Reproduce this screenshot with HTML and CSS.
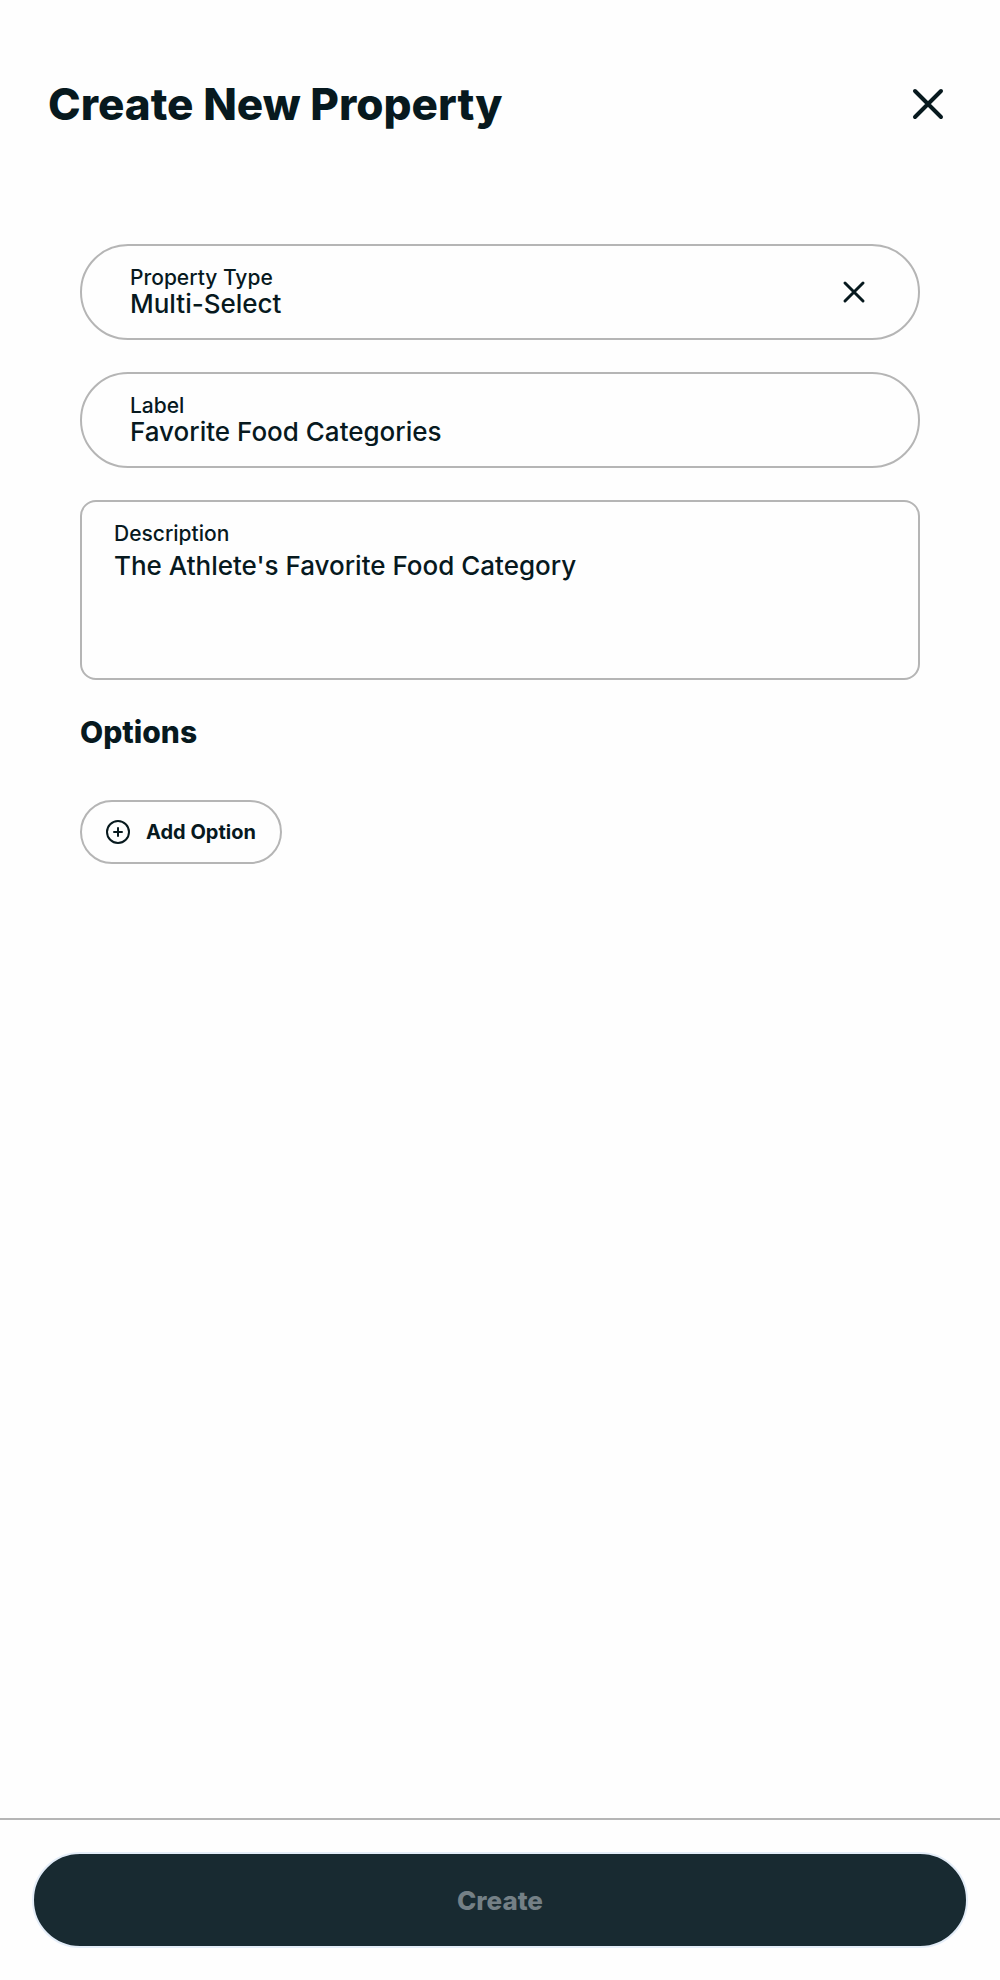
FILE: index.html
```html
<!DOCTYPE html>
<html lang="en">
<head>
  <meta charset="utf-8">
  <meta name="viewport" content="width=device-width, initial-scale=1">
  <title>Create New Property</title>
  <link rel="stylesheet" href="styles.css">
</head>
<body>
  <form class="panel">
    <header class="panel-header">
      <h1 class="panel-title">Create New Property</h1>
      <button class="icon-button close-button" type="button" aria-label="Close">
        <svg width="48" height="48" viewBox="0 0 48 48" aria-hidden="true"><path d="M11 11 37 37M37 11 11 37"/></svg>
      </button>
    </header>
    <main class="panel-body">
      <div class="field">
        <div class="field-text">
          <label class="field-label" for="type">Property Type</label>
          <select class="field-value" id="type">
            <option selected>Multi-Select</option>
          </select>
        </div>
        <button class="icon-button clear-button" type="button" aria-label="Clear property type">
          <svg width="32" height="32" viewBox="0 0 32 32" aria-hidden="true"><path d="M7 7 25 25M25 7 7 25"/></svg>
        </button>
      </div>
      <div class="field">
        <div class="field-text">
          <label class="field-label" for="label">Label</label>
          <input class="field-value" id="label" type="text" value="Favorite Food Categories">
        </div>
      </div>
      <div class="field field-area">
        <label class="field-label" for="description">Description</label>
        <textarea class="field-value" id="description">The Athlete's Favorite Food Category</textarea>
      </div>
      <section class="options">
        <h2 class="options-title">Options</h2>
        <button class="add-button" type="button">
          <svg width="24" height="24" viewBox="0 0 24 24" aria-hidden="true"><circle cx="12" cy="12" r="11"/><path d="M12 8v8M8 12h8"/></svg>
          Add Option
        </button>
      </section>
    </main>
    <footer class="panel-footer">
      <button class="create-button" type="submit" disabled>Create</button>
    </footer>
  </form>
</body>
</html>
```
FILE: styles.css
```css
:root {
  --ink: #07191e;
  --line: #b5b5b5;
}

* {
  box-sizing: border-box;
}

body {
  margin: 0;
  background: #fefefe;
  color: var(--ink);
  font-family: Inter, "Liberation Sans", sans-serif;
}

button,
input,
select,
textarea {
  font: inherit;
  color: inherit;
}

svg {
  display: block;
  flex: none;
  fill: none;
  stroke: currentColor;
  stroke-width: 2;
  stroke-linecap: round;
}

.panel {
  display: flex;
  flex-direction: column;
  min-height: 100vh;
}

.panel-header {
  display: flex;
  align-items: center;
  justify-content: space-between;
  padding: 80px 48px;
}

.panel-title {
  margin: 0;
  font-size: 44px;
  line-height: 48px;
  font-weight: 800;
}

.icon-button {
  flex: none;
  padding: 0;
  border: 0;
  background: none;
}

.close-button svg {
  stroke-width: 4;
}

.panel-body {
  display: flex;
  flex: 1;
  flex-direction: column;
  gap: 32px;
  padding: 36px 80px;
}

.field {
  display: flex;
  align-items: center;
  min-height: 96px;
  padding: 0 48px;
  border: 2px solid var(--line);
  border-radius: 48px;
}

.field-text {
  display: flex;
  flex: 1;
  flex-direction: column;
  min-width: 0;
}

.field-label {
  font-size: 21px;
  line-height: 24px;
  font-weight: 500;
}

.field-value {
  width: 100%;
  height: 28px;
  padding: 0;
  border: 0;
  outline: 0;
  background: none;
  appearance: none;
  font-size: 26px;
  line-height: 28px;
  font-weight: 500;
}

.field-area {
  flex-direction: column;
  align-items: stretch;
  gap: 6px;
  min-height: 180px;
  padding: 20px 32px;
  border-radius: 16px;
}

.field-area .field-value {
  flex: 1;
  resize: none;
}

.clear-button svg {
  stroke-width: 3;
}

.options {
  display: flex;
  flex-direction: column;
  align-items: flex-start;
  gap: 48px;
}

.options-title {
  margin: 0;
  font-size: 30px;
  line-height: 40px;
  font-weight: 800;
}

.add-button {
  display: flex;
  align-items: center;
  gap: 16px;
  height: 64px;
  padding: 0 24px;
  border: 2px solid var(--line);
  border-radius: 32px;
  background: none;
  font-size: 20px;
  font-weight: 700;
}

.panel-footer {
  padding: 32px;
  border-top: 2px solid var(--line);
}

.create-button {
  display: block;
  width: 100%;
  height: 96px;
  border: 2px solid #e4edf8;
  border-radius: 48px;
  background: #182a31;
  color: #748086;
  font-size: 26px;
  font-weight: 800;
}
```
